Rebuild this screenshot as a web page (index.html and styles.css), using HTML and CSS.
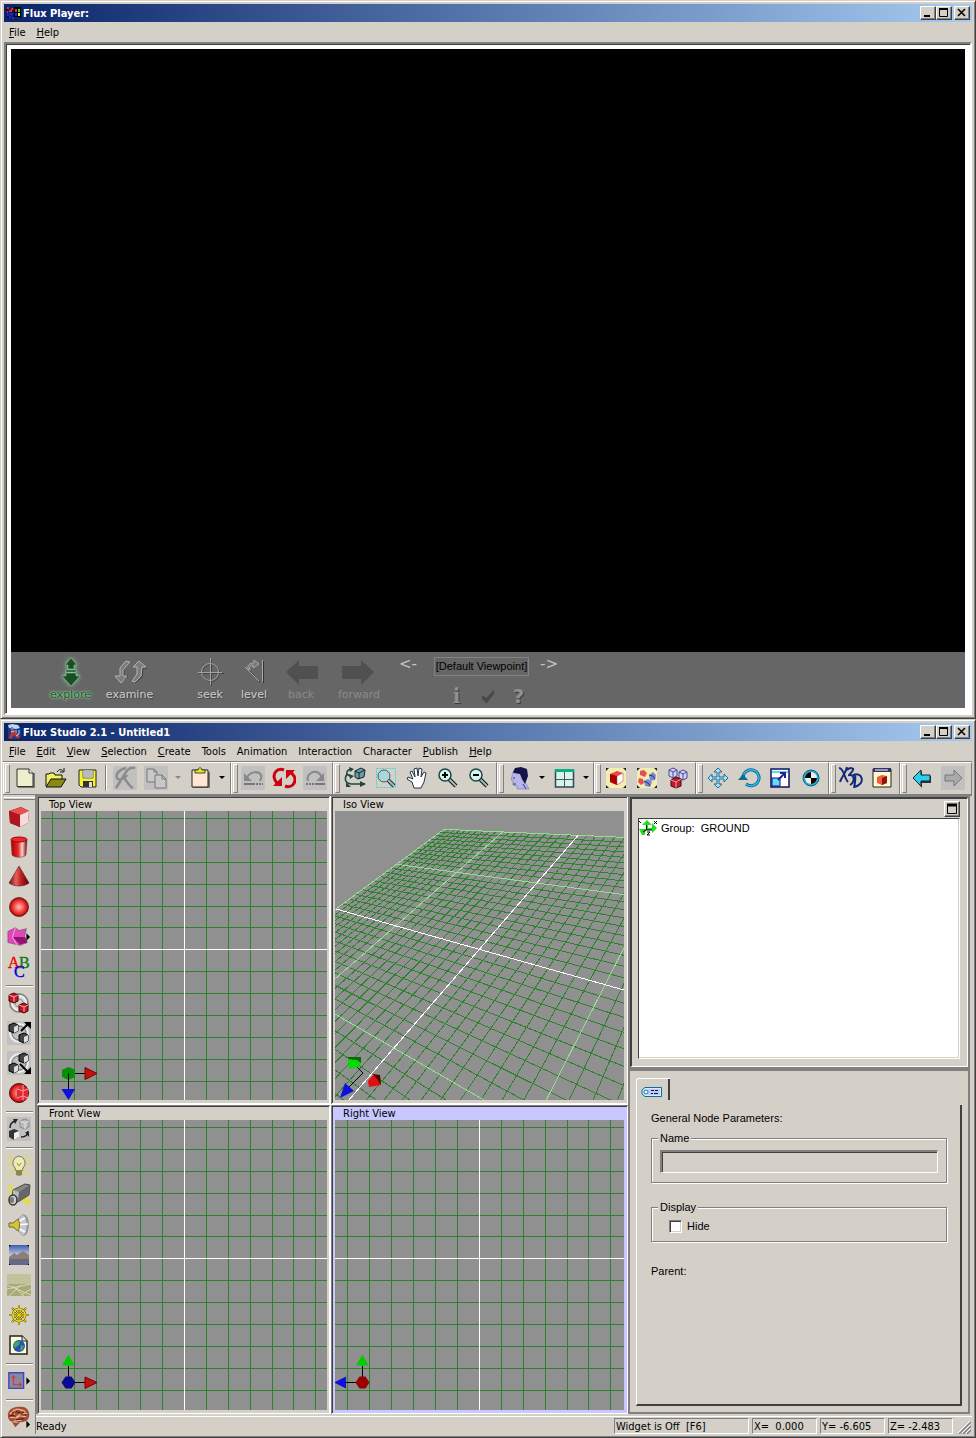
FILE: index.html
```html
<!DOCTYPE html>
<html lang="en">
<head>
<meta charset="utf-8">
<title>Flux Studio</title>
<link rel="stylesheet" href="styles.css">
</head>
<body>
<section class="window player">
  <header class="titlebar">
    <svg class="app-icon" viewBox="0 0 16 16"><path d="M8 2h7v11l-2-1H8z" fill="#000"/><path d="M9 4h2v3H9z" fill="#f22"/><path d="M12 4h2v3h-2z" fill="#2e2"/><path d="M9 8h2v3H9z" fill="#22f"/><path d="M12 8h2v3h-2z" fill="#ff2"/><path d="M1 3h2M5 4h2M3 6h3M1 7h1" stroke="#e22" stroke-width="2"/><path d="M1 10h2M4 9h3M3 12h2M6 13h2" stroke="#22d" stroke-width="2"/><path d="M0 5h2M3 4h1M6 7h2M1 12h2M7 11h1" stroke="#000"/></svg>
    <h1>Flux Player:</h1>
    <div class="caption-buttons">
      <button aria-label="Minimize"><svg viewBox="0 0 12 10"><path d="M2 8h6" stroke="#000" stroke-width="2"/></svg></button><button aria-label="Maximize"><svg viewBox="0 0 12 10"><path d="M1.500 1v7.500h8V1z" fill="none" stroke="#000"/><path d="M1 1h9" stroke="#000" stroke-width="2"/></svg></button><button class="close" aria-label="Close"><svg viewBox="0 0 12 10"><path d="M2 1l7 7M9 1L2 8" stroke="#000" stroke-width="1.600"/></svg></button>
    </div>
  </header>
  <nav class="menubar"><button><u>F</u>ile</button><button><u>H</u>elp</button></nav>
  <div class="player-client">
    <div class="scene"></div>
    <div class="controls">
      <button class="mode wide active"><svg viewBox="0 0 40 30"><g fill="#1d4d27" stroke="#8fce9c" stroke-width=".5"><path d="M20 1l6 7h-3v4h-6V8h-3zM15 13h10v2H15zM15 16h10v3h4l-9 10-9-10h4z"/></g></svg>explore</button>
      <button class="mode wide"><svg viewBox="0 0 40 30"><path d="M20 5l-6 7v7h4l-6 6M25 26l7-6 1-9h4" stroke="#3c3c3c" fill="none"/><g fill="#7c7c7c" stroke-width="1"><path d="M16 4l-6 7v8H5l6 7 6-7h-4v-6l7-8z" stroke="#b4b4b4"/><path d="M22 24l5-7v-7h-4l6-6 7 6h-4l-1 9-6 6z" stroke="#b4b4b4"/></g></svg>examine</button>
      <button class="mode aim"><svg viewBox="0 0 40 30"><g fill="none" stroke="#444" transform="translate(1 1)"><circle cx="20" cy="15" r="8.500"/><path d="M20.500 2v26M8 15.500h25"/></g><g fill="none" stroke="#a4a4a4"><circle cx="20" cy="15" r="8.500"/><path d="M20.500 1v27M8 15.500h24"/></g></svg>seek</button>
      <button class="mode"><svg viewBox="0 0 40 30"><g fill="none" stroke="#333" transform="translate(1 1)"><path d="M28.500 3v22M25 24L12 10"/></g><g fill="none" stroke="#aaa"><path d="M28.500 3v22M25 24L11 10"/><path d="M14 12c-1-3 1-6 6-6V3l5 4-6 4V8c-3 0-4 2-3 5z" fill="#777"/></g></svg>level</button>
      <button class="mode back off"><svg viewBox="0 0 40 30"><path d="M5 15L18 3v6h19v13H18v6z" fill="#505050"/></svg>back</button>
      <button class="mode forward off"><svg viewBox="0 0 40 30"><path d="M35 15L22 3v6H3v13h19v6z" fill="#505050"/></svg>forward</button>
      <div class="viewpoints">
        <button class="step">&lt;-</button><button class="viewpoint">[Default Viewpoint]</button><button class="step next">-&gt;</button>
        <div class="extras">
          <button class="glyph info">i</button>
          <button aria-label="Accept"><svg viewBox="0 0 16 16"><path d="M2 7l4 3 8-8v4l-7 9h-1L2 11z" fill="#484848"/></svg></button>
          <button class="glyph">?</button>
        </div>
      </div>
    </div>
  </div>
</section>

<section class="window studio">
  <header class="titlebar">
    <svg class="app-icon" viewBox="0 0 16 16"><path d="M2 1h9l4 4v7l-3 3H5l-3-4z" fill="#243a80"/><path d="M2 1l4-1 6 1 2 3-4 1-7-1z" fill="#bcd8ee"/><path d="M5 5l4 1 5 7-2 2-4-4-3 4-3-1 3-5z" fill="#b03a3a"/><path d="M6 3v3M10 6v3M13 6v4" stroke="#5a8ad0" stroke-width="2"/><path d="M5 8l3-1M10 12l3-2" stroke="#ecc"/></svg>
    <h1>Flux Studio 2.1 - Untitled1</h1>
    <div class="caption-buttons">
      <button aria-label="Minimize"><svg viewBox="0 0 12 10"><path d="M2 8h6" stroke="#000" stroke-width="2"/></svg></button><button aria-label="Maximize"><svg viewBox="0 0 12 10"><path d="M1.500 1v7.500h8V1z" fill="none" stroke="#000"/><path d="M1 1h9" stroke="#000" stroke-width="2"/></svg></button><button class="close" aria-label="Close"><svg viewBox="0 0 12 10"><path d="M2 1l7 7M9 1L2 8" stroke="#000" stroke-width="1.600"/></svg></button>
    </div>
  </header>
  <nav class="menubar"><button><u>F</u>ile</button><button><u>E</u>dit</button><button><u>V</u>iew</button><button><u>S</u>election</button><button><u>C</u>reate</button><button>Tools</button><button>Animation</button><button>Interaction</button><button>Character</button><button><u>P</u>ublish</button><button><u>H</u>elp</button></nav>

  <div class="toolbar">
    <div class="band">
      <button aria-label="New"><svg viewBox="0 0 24 24"><path d="M5 22h17V7h-2v13H5z" fill="#777"/><path d="M4 3h12l4 4v13.500H4z" fill="#eef0cc" stroke="#333"/><path d="M16 3v4h4" fill="#fff" stroke="#333"/></svg></button>
      <button aria-label="Open"><svg viewBox="0 0 24 24"><path d="M2 20V8h3l1-1h4l1 2h7v4" fill="#f0f060" stroke="#111"/><path d="M2 21l5-8h15l-5 8z" fill="#8a8a10" stroke="#111"/><path d="M13 6c2-3 4-3 6-1m1-3v4h-4" fill="none" stroke="#111"/></svg></button>
      <button aria-label="Save"><svg viewBox="0 0 24 24"><path d="M4 4h17v17H6l-2-2z" fill="#f4f430" stroke="#222"/><path d="M8 4h10v8H8z" fill="#fff" stroke="#666"/><path d="M9 6h8M9 8h8M9 10h8" stroke="#777"/><path d="M8 15h10v6H8z" fill="#333"/><path d="M14 16h3v5h-3z" fill="#ddd"/></svg></button>
      <i class="divider"></i>
      <button aria-label="Cut" class="disabled"><svg viewBox="0 0 24 24"><path d="M22 2c-4-1-7 1-9 4L3 22M13 2C7 3 2 8 4 12c2 3 8 1 10-3M10 12c3 0 5 8 10 10" fill="none" stroke="#8c8c8c" stroke-width="2.500"/></svg></button>
      <button aria-label="Copy" class="disabled"><svg viewBox="0 0 24 24"><g fill="#c8c8c8" stroke="#777"><path d="M3 3h7l3 3v10H3z"/><path d="M11 9h7l4 4v9H11z"/><path d="M18 9v4h4M10 3v3h3" fill="none"/></g></svg></button>
      <button aria-label="Copy options" class="drop"><svg viewBox="0 0 8 8"><path d="M1 2h6L4 5z" fill="#888"/></svg></button>
      <button aria-label="Paste"><svg viewBox="0 0 24 24"><path d="M5 6h17v16H5z" fill="#777"/><path d="M4 4h16v17H4z" fill="#ffe6d2" stroke="#222"/><path d="M7 4h3c0-3 4-3 4 0h3v3H7z" fill="#e4e420" stroke="#443"/></svg></button>
      <button aria-label="Paste options" class="drop"><svg viewBox="0 0 8 8"><path d="M1 2h6L4 5z"/></svg></button>
    </div>
    <div class="band">
      <button aria-label="Undo" class="disabled"><svg viewBox="0 0 24 24"><path d="M6 12c2-6 11-8 14-3 1 2 0 4-1 6" fill="none" stroke="#888" stroke-width="2"/><path d="M3 7v8h8z" fill="#888"/><path d="M3 18h9" stroke="#777" stroke-width="2"/><path d="M12 18h10" stroke="#777" stroke-width="2" stroke-dasharray="2 1"/></svg></button>
      <button aria-label="Update"><svg viewBox="0 0 24 24"><g fill="none" stroke="#d00010" stroke-width="3"><path d="M12 4C5 1 0 8 3 14l3 5M13 20c7 3 12-4 9-10l-4-5"/></g><path d="M1 20h9v-9zM23 4h-9v9z" fill="#d00010"/></svg></button>
      <button aria-label="Redo" class="disabled"><svg viewBox="0 0 24 24"><path d="M5 15C3 8 11 3 17 8l2 4" fill="none" stroke="#888" stroke-width="2"/><path d="M21 7v8h-8z" fill="#888"/><path d="M3 18h10" stroke="#777" stroke-width="2" stroke-dasharray="2 1"/><path d="M13 18h9" stroke="#777" stroke-width="2"/></svg></button>
    </div>
    <div class="band">
      <button aria-label="Orbit"><svg viewBox="0 0 24 24"><path d="M12 5l6-3 4 2-1 7-6 2-3-2z" fill="#68a0a0" stroke="#123"/><path d="M12 5l4 2 6-3M16 7v6" fill="none" stroke="#123"/><path d="M9 3C3 4 2 8 7 10M4 8c-3 5-2 9 4 10h14" fill="none" stroke="#244" stroke-width="1.500"/><path d="M6 1l5 2-4 3zM6 8l5 2-4 3zM17 15l6 3-6 3zM3 16l5 5H3z" fill="#244"/></svg></button>
      <button aria-label="Zoom region"><svg viewBox="0 0 24 24"><path d="M2.500 2.500h19v19h-19z" fill="none" stroke="#38dede" stroke-dasharray="2 1"/><path d="M14 14l6 6" stroke="#333" stroke-width="4"/><path d="M14 14l6 6" stroke="#9dbdbd" stroke-width="2"/><circle cx="10" cy="10" r="6" fill="#a8d8da" stroke="#556"/></svg></button>
      <button aria-label="Pan"><svg viewBox="0 0 24 24"><path d="M9 22l-2-6-5-3 1-2 5 2-3-7 2-1 3 6-1-8 3-1 1 8 1-8 3 1-1 8 3-5 2 1-2 9-3 6z" fill="#fff" stroke="#234"/></svg></button>
      <button aria-label="Zoom in"><svg viewBox="0 0 24 24"><path d="M13 13l7 7" stroke="#111" stroke-width="4"/><path d="M13 13l7 7" stroke="#a0c4c0" stroke-width="2"/><circle cx="9" cy="9" r="6" fill="#d4f4ef" stroke="#244" stroke-width="1.500"/><path d="M6 9h6M9 6v6" stroke="#000" stroke-width="2"/></svg></button>
      <button aria-label="Zoom out"><svg viewBox="0 0 24 24"><path d="M13 13l7 7" stroke="#111" stroke-width="4"/><path d="M13 13l7 7" stroke="#a0c4c0" stroke-width="2"/><circle cx="9" cy="9" r="6" fill="#d4f4ef" stroke="#244" stroke-width="1.500"/><path d="M6 9h6" stroke="#000" stroke-width="2"/></svg></button>
    </div>
    <div class="band avatar">
      <button aria-label="Avatar"><svg viewBox="0 0 24 24"><path d="M5 6L3 14l2 1v4l4 1v3h12l-4-7 2-8z" fill="#b5b5e6" stroke="#77a" stroke-width=".6"/><path d="M5 6l2-4 6-1 6 2 1 7-3 8-3-5-2-5-6-1z" fill="#14144a"/><path d="M5 12h2M5 18h3M15 18l3 5" stroke="#339"/></svg></button>
      <button aria-label="Avatar options" class="drop"><svg viewBox="0 0 8 8"><path d="M1 2h6L4 5z"/></svg></button>
      <button aria-label="Layout"><svg viewBox="0 0 24 24"><path d="M3.500 4h18v17h-18z" fill="#d8f4e6" stroke="#345" stroke-width="1.500"/><path d="M3 3h19v3H3z" fill="#0bae84"/><path d="M12.500 6v15M3 13.500h19" stroke="#456"/></svg></button>
      <button aria-label="Layout options" class="drop"><svg viewBox="0 0 8 8"><path d="M1 2h6L4 5z"/></svg></button>
    </div>
    <div class="band">
      <button aria-label="Object"><svg viewBox="0 0 24 24"><path d="M2 2h20v20H2z" fill="#222"/><path d="M5 2h14l3 3v14l-3 3H5l-3-3V5z" fill="#f2edb0"/><path d="M6 8l7-3 6 2v8l-6 4-7-3z" fill="#e44"/><path d="M6 8l7 2v9l-7-3z" fill="#a00"/><path d="M13 10l6-3v8l-6 4z" fill="#fff" stroke="#a44" stroke-width=".5"/></svg></button>
      <button aria-label="Objects"><svg viewBox="0 0 24 24"><path d="M2 2h20v20H2z" fill="#222"/><path d="M5 2h14l3 3v14l-3 3H5l-3-3V5z" fill="#f2edb0"/><path d="M5 5l4-1 3 3-2 4-5-2zM4 12l4 1 1 4-3 2-3-3z" fill="#e45050"/><path d="M14 9l4-3 3 3-1 5-5 1zM9 15l4-2 4 3-2 5-5-1z" fill="#7888d8"/><path d="M14 9l4 1 2 3M9 15l4 2 2 3" fill="none" stroke="#336"/></svg></button>
      <button aria-label="Group"><svg viewBox="0 0 24 24"><g fill="#d8d4e8" stroke="#4545aa"><path d="M3 4l4-2 4 2v6l-4 2-4-2zM3 4l4 2v6M7 6l4-2M13 6l4-2 4 2v6l-4 2-4-2zM13 6l4 2v6M17 8l4-2"/></g><path d="M5 14l5-3 5 2v7l-5 2-5-2z" fill="#b52030" stroke="#501"/><path d="M5 14l5 2v6M10 16l5-3" fill="none" stroke="#f99"/></svg></button>
    </div>
    <div class="band">
      <button aria-label="Move"><svg viewBox="0 0 24 24"><path d="M12 2l4 4h-3v5h5V8l4 4-4 4v-3h-5v5h3l-4 4-4-4h3v-5H6v3l-4-4 4-4v3h5V6H8z" fill="#a4e8f6" stroke="#246a99"/></svg></button>
      <button aria-label="Rotate"><svg viewBox="0 0 24 24"><path d="M6 12a8 8 0 1 1 3 6" fill="none" stroke="#0b5aa0" stroke-width="3"/><path d="M6 12a8 8 0 1 1 3 6" fill="none" stroke="#29bce0" stroke-width="1.500"/><path d="M1 14l5-6 5 6z" fill="#087292"/></svg></button>
      <button aria-label="Scale"><svg viewBox="0 0 24 24"><path d="M3 3h18v18H3z" fill="#fff" stroke="#116" stroke-width="1.500"/><path d="M4 5h16v2H4z" fill="#51e0f0"/><path d="M4 12h8v8H4z" fill="#61def0" stroke="#118"/><path d="M10 14l7-7m0 5V7h-5" stroke="#229" fill="none" stroke-width="2"/></svg></button>
      <button aria-label="Center"><svg viewBox="0 0 24 24"><circle cx="12" cy="12" r="8" fill="#29a8c8" stroke="#07668c"/><circle cx="12" cy="12" r="6" fill="#eee"/><path d="M12 12V6a6 6 0 0 0-6 6zM12 12v6a6 6 0 0 0 6-6z"/></svg></button>
    </div>
    <div class="band">
      <button aria-label="X3D"><svg viewBox="0 0 24 24"><path d="M0 2c5 0 5 10 9 14M8 1C7 7 3 10 1 16M8 4c3-3 7-2 6 0-1 3-4 4-4 5 6-1 6 7 1 10M16 8c1 5 0 9-1 14M14 9c10-4 13 10 1 12" fill="none" stroke="#182878" stroke-width="2"/></svg></button>
      <button aria-label="Preview"><svg viewBox="0 0 24 24"><path d="M3 3h18v18H3z" fill="#fff9d0" stroke="#222"/><path d="M3 2h18v4H3z" fill="#33336a"/><path d="M5 4h13" stroke="#fff"/><path d="M7 11l5-2 5 1v7l-5 2-5-2z" fill="#f45c40"/><path d="M12 12l5-2v7l-5 2z" fill="#8c1414"/></svg></button>
    </div>
    <div class="band">
      <button aria-label="Previous"><svg viewBox="0 0 24 24"><path d="M4 13l8-8v5h9v7h-9v5z" fill="#333"/><path d="M3 12l8-8v5h9v6h-9v5z" fill="#28d0ee" stroke="#123"/></svg></button>
      <button aria-label="Next" class="disabled"><svg viewBox="0 0 24 24"><path d="M21 12l-8-8v5H4v6h9v5z" fill="#aaa" stroke="#777"/></svg></button>
    </div>
  </div>

  <div class="studio-body">
    <div class="palette">
      <button aria-label="Box"><svg viewBox="0 0 24 24"><path d="M2 6l12-4 8 4-1 12-8 4-10-4z" fill="#7a0c14"/><path d="M2 6l12-4 8 4-9 4z" fill="#e85050"/><path d="M2 6l11 4v12L3 18z" fill="#b01520"/><path d="M13 10l9-4-1 12-8 4z" fill="#f7dada"/></svg></button>
      <button aria-label="Cylinder"><svg viewBox="0 0 24 24"><defs><linearGradient id="cyl"><stop offset="0" stop-color="#a00"/><stop offset=".45" stop-color="#e42a2a"/><stop offset=".7" stop-color="#fbd0d0"/><stop offset="1" stop-color="#700"/></linearGradient></defs><path d="M4 5l1 15c2 3 12 3 14 0l1-15z" fill="url(#cyl)" stroke="#733" stroke-width=".5"/><ellipse cx="12" cy="4.500" rx="8" ry="2.500" fill="#f22" stroke="#811"/></svg></button>
      <button aria-label="Cone"><svg viewBox="0 0 24 24"><defs><linearGradient id="cone"><stop offset="0" stop-color="#700c0c"/><stop offset=".35" stop-color="#e86060"/><stop offset=".6" stop-color="#c02020"/><stop offset="1" stop-color="#500"/></linearGradient></defs><path d="M12 1l10 17c-5 4-15 4-20 0z" fill="url(#cone)" stroke="#522" stroke-width=".6"/></svg></button>
      <button aria-label="Sphere"><svg viewBox="0 0 24 24"><defs><radialGradient id="ball"><stop offset="0" stop-color="#ffc0b0"/><stop offset=".6" stop-color="#f24040"/><stop offset="1" stop-color="#a00"/></radialGradient></defs><circle cx="12" cy="12" r="9.500" fill="url(#ball)" stroke="#511" stroke-width=".7"/></svg></button>
      <button aria-label="Extrusion"><svg viewBox="0 0 26 24"><path d="M1 6l8-4 4 3 8-2-2 8 3 7-8 3-13-3z" fill="#e048b8" stroke="#747" stroke-width=".7"/><path d="M6 12h13l3 6-8 2z" fill="#941272"/><path d="M9 2L6 12l5 9" fill="none" stroke="#f7a8e0"/><path d="M21 8l4 4-4 4z"/></svg></button>
      <button aria-label="Text"><svg viewBox="0 0 24 24"><g font-family="Liberation Serif" font-size="16" stroke-width=".4"><text x="1" y="13" fill="#e00" stroke="#e00">A</text><text x="12" y="13" fill="#187818" stroke="#187818">B</text><text x="7" y="22" fill="#00d" stroke="#00d">C</text></g></svg></button>
      <hr>
      <button aria-label="Link"><svg viewBox="0 0 24 24"><circle cx="12" cy="12" r="9" fill="none" stroke="#888" stroke-width="2"/><circle cx="12" cy="12" r="7" fill="none" stroke="#eee" stroke-width="2"/><circle cx="12" cy="12" r="4" fill="none" stroke="#999"/><path d="M2 4l5-2 4 2v6l-4 2-5-2zM12 14l5-2 4 2v6l-4 2-5-2z" fill="#c01828" stroke="#400"/><path d="M2 4l5 2v5M7 6l4-2M12 14l5 2v5M17 16l4-2" fill="none" stroke="#faa"/></svg></button>
      <button aria-label="Out" class="disabled"><svg viewBox="0 0 24 24"><circle cx="12" cy="12" r="9" fill="none" stroke="#eee" stroke-width="2"/><circle cx="12" cy="12" r="7" fill="none" stroke="#777"/><path d="M2 4l5-2 4 2v6l-4 2-5-2zM12 14l5-2 4 2v6l-4 2-5-2z" fill="#444" stroke="#000"/><path d="M7 6l4-2v6l-4 2zM17 16l4-2v6l-4 2z" fill="#ddd"/><path d="M14 10l8-8" stroke="#000" stroke-width="2"/><path d="M17 1h7v7z"/></svg></button>
      <button aria-label="In" class="disabled"><svg viewBox="0 0 24 24"><circle cx="12" cy="12" r="9" fill="none" stroke="#eee" stroke-width="2"/><circle cx="12" cy="12" r="7" fill="none" stroke="#777"/><path d="M12 4l5-2 4 2v6l-4 2-5-2zM2 14l5-2 4 2v6l-4 2-5-2z" fill="#444" stroke="#000"/><path d="M17 6l4-2v6l-4 2zM7 16l4-2v6l-4 2z" fill="#ddd"/><path d="M13 13l9 9" stroke="#000" stroke-width="2"/><path d="M17 23h7v-7z"/></svg></button>
      <button aria-label="Mesh"><svg viewBox="0 0 24 24"><circle cx="12" cy="12" r="9.500" fill="url(#ball)" stroke="#511"/><path d="M10 8l5-4 6 4v9l-5 3-6-3z" fill="#e02838"/><path d="M10 8l6 2 5-2M16 10v9M16 4v6M10 17l6-2 5 2" stroke="#f9a0a0" fill="none"/></svg></button>
      <hr>
      <button aria-label="Replace" class="disabled"><svg viewBox="0 0 24 24"><path d="M2 14l5-2 5 2v6l-5 3-5-3z" fill="#333"/><path d="M7 16l5-2v6l-5 3z" fill="#eee"/><path d="M13 4l5-2 4 2v6l-4 2-5-2z" fill="#bbb" stroke="#888"/><path d="M13 4l5 2v6M18 6l4-2" fill="none" stroke="#e4e4e4"/><path d="M3 11c0-4 2-6 5-7M21 14c0 4-3 6-7 6" stroke="#222" stroke-width="1.500" fill="none"/><path d="M6 2h5l-3 5zM18 15h4v5z" fill="#222"/></svg></button>
      <hr>
      <button aria-label="Light"><svg viewBox="0 0 24 24"><path d="M2 2l20 20M22 2L2 22M0 11h24" stroke="#e2dc40" stroke-width="1.500"/><path d="M12 3a7 7 0 0 0-4 12l1 3h6l1-3a7 7 0 0 0-4-12z" fill="#ece8b8" stroke="#776"/><path d="M9 17h6v5l-3 1-3-1z" fill="#8c8850"/><path d="M10 10l2 3 2-3" fill="none" stroke="#a90"/></svg></button>
      <button aria-label="Camera"><svg viewBox="0 0 24 24"><path d="M2 2l20 20M22 2L2 22M1 8l22 10" stroke="#e8e020" stroke-width="2"/><path d="M6 7l12-6 5 1-1 10-11 7-6-3z" fill="#888" stroke="#444"/><path d="M6 7l6 2-1 9-5-2z" fill="#bbb"/><path d="M12 9l11-7-1 10-11 7z" fill="#666"/><ellipse cx="6" cy="17" rx="4" ry="5" fill="#ccc" stroke="#333" stroke-width="1.500"/><ellipse cx="5" cy="17" rx="2" ry="3" fill="#777"/></svg></button>
      <button aria-label="Sound"><svg viewBox="0 0 24 24"><ellipse cx="17" cy="12" rx="5" ry="10.500" fill="#9a9aa2"/><path d="M8 9l8-7.500c5 2 6 19 0 21L8 15z" fill="#c8c8ce" stroke="#888" stroke-width=".7"/><path d="M9 10l9-5M9 12l12-1M9 14l9 5" stroke="#fff" stroke-width="1.500"/><path d="M2 10h4l5-4c2 3 2 9 0 12l-5-4H2z" fill="#d8c62c" stroke="#664"/></svg></button>
      <button aria-label="Background"><svg viewBox="0 0 24 24"><defs><linearGradient id="sky" x2="0" y2="1"><stop offset="0" stop-color="#3c5ea8"/><stop offset="1" stop-color="#eef"/></linearGradient></defs><path d="M2 2h20v20H2z"/><path d="M4 2h16l2 2v12H2V4z" fill="url(#sky)"/><path d="M2 14l5-4 3 2 6-4 6 4v8l-2 2H4l-2-2z" fill="#8c8070"/><path d="M2 16h20v4l-2 2H4l-2-2z" fill="#66688a"/></svg></button>
      <button aria-label="Ground"><svg viewBox="0 0 24 24"><path d="M0 1h24v22H0z" fill="#a8aa78"/><path d="M0 1h24v10H0z" fill="#c2c39c"/><path d="M0 16l24-5M0 12l24 10M2 23l12-11M17 23L6 13M14 22l10-6" stroke="#d8dabc"/></svg></button>
      <button aria-label="Navigation"><svg viewBox="0 0 24 24"><g fill="none" stroke="#6a6010" stroke-width="2.500"><circle cx="12" cy="12" r="6"/><path d="M12 2v20M2 12h20M5 5l14 14M19 5L5 19" stroke-width="2"/></g><g fill="none" stroke="#ecd820"><circle cx="12" cy="12" r="6" stroke-width="1.500"/><path d="M12 2v20M2 12h20M5 5l14 14M19 5L5 19"/></g></svg></button>
      <button aria-label="World"><svg viewBox="0 0 24 24"><path d="M3 3h12l5 5v13H3z" fill="#fffed0" stroke="#222" stroke-width="1.500"/><path d="M15 3v5h5" fill="#ddb" stroke="#222"/><circle cx="12" cy="13" r="6" fill="#264ec0"/><path d="M8 9l5-1-1 4-4 3-2-3zM14 12l3 1-2 5-2-1z" fill="#40a860"/></svg></button>
      <hr>
      <button aria-label="Axes"><svg viewBox="0 0 26 24"><path d="M2 3h16v17H2z" fill="#8888a0" stroke="#3848c0" stroke-width="1.500"/><path d="M7 7v9h8M5 9l2-3 2 3M13 14l3 2-3 2" fill="none" stroke="#e22"/><path d="M21 8l4 4-4 4z"/></svg></button>
      <hr>
      <button aria-label="Behavior"><svg viewBox="0 0 26 24"><path d="M1 11C0 4 8 0 14 1c7-1 11 5 10 10-1 7-7 6-11 7-6 1-12-1-12-7zM5 17l4 6 5-5z" fill="#a04c32"/><path d="M3 9c3-4 5-2 5 0s4 4 6 0 4 1 8-1M6 5c4 0 3-3 8-1s5 0 6 3M3 13c4-2 6 2 9-1s5 1 9-1M7 17c3-2 6 0 9-2" fill="none" stroke="#ecb498" stroke-width="1.300"/><path d="M3 11c4-2 5 0 7 0M10 6c4 1 4 3 8 1M10 15l8-1M6 7l2 1M19 9l2 1" fill="none" stroke="#571c0c" stroke-width="1.300"/><path d="M21 16l4 4-4 4z"/></svg></button>
    </div>

    <div class="stage">
      <div class="workspace">
        <div class="views">
          <section class="view"><h2>Top View</h2>
            <svg class="grid" viewBox="0 0 286 289" preserveAspectRatio="xMinYMin slice" data-plane="143,138"><g class="lines"></g><g class="gizmo"><path class="stem" d="M34 262.500h12"/><path fill="#069006" d="M21 259l3-1.500 3.500-1.500 3.500 1.500 3 1.500v7l-3 1.500-3.500 1.500-3.500-1.500-3-1.500z"/><path class="stem" d="M27.500 262v17"/><path class="red" d="M44 256.500l12 6-12 6z"/><path class="blue" d="M20.500 278h13.500l-6.500 11z"/></g></svg></section>
          <section class="view"><h2>Iso View</h2>
            <svg class="grid" viewBox="0 0 289 289" preserveAspectRatio="xMinYMin slice" data-plane="iso"><g class="lines"></g><g class="gizmo"><path class="stem" d="M22 256l6 6-16 16"/><path fill="#0d0" d="M13 248l9 1 4 3-3 4-9 2z"/><path fill="#0a6a0a" d="M13 246h13v6l-4-3-9-1z"/><path fill="#e01010" d="M33 270l6-7 5 4 2 7-12 2z"/><path fill="#500" d="M38 263l7 1 1 10-4-6z"/><path class="blue" d="M10 272l9 8-14 7z"/></g></svg></section>
          <section class="view"><h2>Front View</h2>
            <svg class="grid" viewBox="0 0 286 290" preserveAspectRatio="xMinYMin slice" data-plane="143,138"><g class="lines"></g><g class="gizmo"><path class="stem" d="M27.500 246v16M28 262.500h18"/><path class="navy" d="M20.500 262.500l4-6h6l4 6-4 6h-6z"/><path class="red" d="M44 257l12 5.500-12 6z"/><path class="green" d="M21 245.500l6.500-11 6 11z"/></g></svg></section>
          <section class="view current"><h2>Right View</h2>
            <svg class="grid" viewBox="0 0 289 290" preserveAspectRatio="xMinYMin slice" data-plane="144,138"><g class="lines"></g><g class="gizmo"><path class="stem" d="M27.500 246v16M10 262.500h18"/><path fill="#900" d="M20.500 262.500l4-6h6l4 6-4 6h-6z"/><path class="blue" d="M11 256.500L-1 262.500l12 6z"/><path class="green" d="M21 245.500l6.500-11 6 11z"/></g></svg></section>
        </div>

        <div class="side">
          <section class="tree-panel">
            <div class="tree-head"><button aria-label="Expand panel"><svg viewBox="0 0 12 12"><path d="M1.500 2v8.500h9V2z" fill="none" stroke="#000"/><path d="M1 2h10" stroke="#000" stroke-width="3"/></svg></button></div>
            <ul class="tree"><li><svg viewBox="0 0 18 16"><path d="M3 5l5-5 5 5zM13 3l5 5-5 5zM0 9h6v6H3z" fill="#1ee01e"/><path d="M8 4v5h5M8 9l-5 4" fill="none" stroke="#1ee01e" stroke-width="2"/><path d="M7.500 5v5H13M7 10l-3 2M0 1l2 2M15 1l3 3m0-3l-3 3M8 12h3l-3 3h3" fill="none" stroke="#000"/></svg>Group:&nbsp; GROUND</li></ul>
          </section>
          <section class="props">
            <button class="tab" aria-label="General"><svg viewBox="0 0 22 12"><path d="M4 1.500h16.500v9H4L1 8V4z" fill="#c4f4ff" stroke="#126a98"/><path d="M7 3h12v6H7z" fill="#c8c8ff"/><circle cx="5" cy="6" r="2" fill="#fff" stroke="#126a98"/><path d="M10 4.500h3m1 0h3M10 7.500h2m1 0h4" stroke="#113"/></svg></button>
            <div class="page">
              <p>General Node Parameters:</p>
              <fieldset class="name"><legend><label for="node-name">Name</label></legend><input id="node-name" type="text" disabled></fieldset>
              <fieldset class="display"><legend>Display</legend><input id="hide" type="checkbox"><label for="hide">Hide</label></fieldset>
              <p>Parent:</p>
            </div>
          </section>
        </div>
      </div>
      <footer class="status">
        <span class="message">Ready</span>
        <span class="cell widget">Widget is Off&nbsp; [F6]</span>
        <span class="cell">X=&nbsp; 0.000</span>
        <span class="cell">Y= -6.605</span>
        <span class="cell">Z= -2.483</span>
        <svg class="sizer" viewBox="0 0 14 14"><path d="M1 13L13 1M5 13l8-8M9 13l4-4" stroke="#fff"/><path d="M2 14L14 2M6 14l8-8M10 14l4-4" stroke="#808080" stroke-width="1.500"/></svg>
      </footer>
    </div>
  </div>
</section>
<script src="grid.js"></script>
</body>
</html>
```

FILE: styles.css
```css
* { box-sizing: border-box; }
:root { --face: #d4d0c8; --shadow: #808080; --dark: #404040; }
body {
  margin: 0; min-height: 100vh; display: flex; flex-direction: column;
  background: var(--face); color: #000;
  font: 11px/13px "DejaVu Sans Condensed", "Noto Sans", sans-serif;
}
button { font: inherit; color: inherit; border: 0; padding: 0; background: none; }
svg { display: block; }
h1, h2, p, ul { margin: 0; padding: 0; font-size: inherit; font-weight: normal; }

.window {
  flex: 1 1 0; display: flex; flex-direction: column; padding: 3px;
  border: 1px solid var(--face); border-right-color: var(--dark); border-bottom-color: var(--dark);
  box-shadow: inset 1px 1px #fff, inset -1px -1px var(--shadow);
}
.titlebar {
  display: flex; align-items: center; height: 18px; padding: 0 2px; flex: none;
  background: linear-gradient(90deg, #0a246a, #a6caf0); color: #fff;
}
.app-icon { width: 16px; height: 16px; }
.titlebar h1 { margin-left: 1px; font-weight: bold; }
.caption-buttons { display: flex; margin-left: auto; }
.caption-buttons button, .tree-head button {
  width: 16px; height: 14px; padding: 1px; background: var(--face);
  border: 1px solid #fff; border-right-color: var(--dark); border-bottom-color: var(--dark);
  box-shadow: inset -1px -1px var(--shadow);
}
.caption-buttons svg { width: 12px; height: 10px; }
.caption-buttons .close { margin-left: 2px; }
.menubar { display: flex; gap: 11px; height: 20px; padding: 0 5px; flex: none; align-items: center; }
.menubar u { text-underline-offset: 1px; }

.player-client {
  flex: 1; display: flex; flex-direction: column; padding: 5px; background: #fff;
  border: 2px solid var(--shadow); border-right-color: #fff; border-bottom-color: #fff;
  box-shadow: inset 1px 1px var(--dark);
}
.scene { flex: 1; background: #000; }
.controls { display: flex; height: 56px; padding: 5px 0 0 30px; background: #666; color: #ccc; font: 11px/13px "DejaVu Sans", sans-serif; }
.mode { display: flex; flex-direction: column; align-items: center; gap: 1px; width: 44px; height: 46px; text-shadow: 1px 1px #444; }
.mode svg { width: 40px; height: 30px; flex: none; }
.mode.wide { width: 59px; }
.mode.aim { margin-left: 29px; }
.mode.back { width: 50px; }
.mode.forward { width: 66px; }
.mode.off { color: #8a8a8a; text-shadow: none; }
.mode.active { color: #1f5a2b; text-shadow: 0 0 2px #9fe0ac, 0 0 3px #8ccf99; }
.mode.active svg { filter: drop-shadow(0 0 2px #8fd09d); }
.viewpoints { display: grid; grid-template-columns: 32px 95px 32px; column-gap: 3px; row-gap: 9px; align-content: start; padding-left: 7px; }
.step { font-size: 15px; line-height: 15px; color: #c4c4c4; text-align: left; padding-bottom: 4px; }
.step.next { padding-left: 8px; }
.viewpoint { height: 19px; border: 1px solid #828282; color: #000; font: 11px/13px "Liberation Sans", sans-serif; white-space: nowrap; }
.extras { grid-column: 1 / -1; display: flex; justify-content: center; gap: 15px; height: 22px; padding-left: 12px; align-items: center; }
.extras button { width: 16px; }
.extras .glyph { font: bold 20px/22px "DejaVu Sans", sans-serif; color: #909090; text-shadow: 1px 1px #3c3c3c; }
.extras .info { font-family: "DejaVu Serif", serif; }

.toolbar { display: flex; height: 34px; flex: none; border-top: 1px solid var(--shadow); border-bottom: 1px solid var(--shadow); margin-left: -1px; }
.band { position: relative; display: flex; align-items: flex-start; padding: 1px 2px 0 5px; border-top: 1px solid #fff; border-left: 1px solid #fff; border-right: 1px solid var(--shadow); flex: none; }
.band:last-child { flex: 1; }
.band.avatar { padding-left: 6px; padding-right: 1px; }
.band::before { content: ""; position: absolute; left: 1px; top: 1px; bottom: 1px; width: 3px; border: 1px solid #fff; border-right-color: var(--shadow); border-bottom-color: var(--shadow); }
.band button { width: 31px; height: 28px; display: grid; place-items: center; }
.band svg, .palette svg { width: 24px; height: 24px; }
.band .drop { width: 13px; }
.band .drop svg { width: 8px; height: 8px; }
.disabled svg { background: #c0c0c0; }
.divider { width: 2px; height: 26px; margin: 1px 2px 0 3px; border-left: 1px solid var(--shadow); border-right: 1px solid #fff; }

.studio-body { flex: 1; display: flex; min-height: 0; }
.palette { width: 32px; padding-top: 7px; flex: none; border-right: 1px solid var(--shadow); background: linear-gradient(#fff, #fff) 0 2px / 31px 1px no-repeat, linear-gradient(#808080, #808080) 0 4px / 31px 1px no-repeat; }
.palette button { display: grid; place-items: center; width: 30px; height: 30px; }
.palette hr { width: 27px; height: 2px; margin: 3px 2px 1px; border: 0; border-top: 1px solid var(--shadow); border-bottom: 1px solid #fff; }

.stage { flex: 1; display: flex; flex-direction: column; min-width: 0; }
.workspace { flex: 1; min-height: 0; display: grid; grid-template-columns: minmax(0, 591fr) minmax(0, 344fr); padding: 1px 0 0 1px; background: var(--shadow); }
.views { display: grid; grid-template: minmax(0, 308fr) minmax(0, 309fr) / minmax(0, 293fr) minmax(0, 297fr); gap: 1px; min-height: 0; background: #fff; }
.view {
  display: flex; flex-direction: column; min-height: 0; padding: 2px 4px 4px; background: var(--face);
  box-shadow: inset 1px 1px var(--shadow), inset -1px -1px #fff, inset 2px 2px var(--dark);
}
.view:nth-child(odd) { padding-right: 3px; }
.view.current { background: #c8c8ff; }
.view h2 { height: 13px; flex: none; padding-left: 8px; }
.grid { flex: 1 1 0; min-height: 0; width: 100%; background: #909090; }
.lines path { fill: none; stroke-width: 1px; shape-rendering: crispEdges; }
.minor { stroke: #2d822d; }
.major { stroke: #90e090; }
.axis { stroke: #fff; }
.stem { fill: none; stroke: #000; }
.red { fill: #c80f0f; stroke: #700; stroke-width: 1px; }
.blue { fill: #1010dc; }
.navy { fill: #0a0a90; }
.green { fill: #0c0; }

.side { display: grid; grid-template-rows: minmax(0, 270fr) minmax(0, 341fr); gap: 4px; padding: 1px 2px 2px; border-right: 2px solid var(--face); font-family: "Liberation Sans", sans-serif; }
.tree-panel { display: flex; flex-direction: column; background: var(--face); padding: 0 7px 7px 6px; border: solid var(--dark); border-right-color: #fff; border-bottom-color: #fff; border-width: 2px 1px 1px 2px; }
.tree-head { height: 19px; padding: 2px 0 0; flex: none; }
.tree-head button { display: block; margin-left: auto; height: 16px; }
.tree-head svg { width: 12px; height: 12px; }
.tree { flex: 1; list-style: none; background: #fff; border: 1px solid var(--dark); border-right-color: #fff; border-bottom-color: #fff; box-shadow: inset -1px -1px var(--face); }
.tree li { display: flex; align-items: center; gap: 4px; height: 18px; }
.tree svg { width: 18px; height: 16px; }
.props { display: flex; flex-direction: column; align-items: stretch; background: var(--face); padding: 7px 6px 6px; }
.tab { display: block; width: 34px; height: 27px; flex: none; padding: 0 0 1px 4px; border-top: 1px solid #fff; border-left: 1px solid #fff; border-top-left-radius: 3px; background: linear-gradient(#404040, #404040) right top / 2px 21px no-repeat; }
.tab svg { width: 22px; height: 12px; }
.page { flex: 1; padding: 7px 13px 0 14px; border-left: 1px solid #fff; border-right: 2px solid var(--dark); border-bottom: 2px solid var(--dark); }
.page fieldset { margin: 0; padding: 0 8px; min-width: 0; border: 1px solid var(--shadow); box-shadow: 1px 1px #fff, inset 1px 1px #fff; }
.page legend { padding: 0 2px; margin-left: -2px; background: var(--face); }
.page .name { height: 51px; margin-top: 7px; }
.name input { display: block; width: 100%; height: 23px; margin-top: 5px; background: var(--face); border: 2px solid var(--dark); border-right: 1px solid #fff; border-bottom: 1px solid #fff; border-top-color: var(--shadow); border-left-color: var(--shadow); box-shadow: inset 1px 1px var(--dark); }
.page .display { height: 41px; margin: 18px 0 23px; }
.display input { appearance: none; width: 13px; height: 13px; margin: 6px 5px 0 9px; vertical-align: top; background: #fff; border: 1px solid; border-color: var(--shadow) #fff #fff var(--shadow); box-shadow: inset 1px 1px var(--dark), inset -1px -1px var(--face); }
.display label { display: inline-block; margin-top: 6px; }

.status { display: flex; gap: 3px; height: 20px; flex: none; padding: 4px 0 0; box-shadow: inset 0 2px var(--face), inset 0 3px #fff; }
.message { flex: 1; padding-top: 2px; }
.cell { width: 65px; padding: 1px; border: 1px solid var(--shadow); border-right-color: #fff; border-bottom-color: #fff; white-space: pre; }
.cell.widget { width: 135px; }
.sizer { width: 14px; height: 14px; margin: 2px 1px 0 1px; }
```

FILE: grid.js
```js
const NS = 'http://www.w3.org/2000/svg';
const SPAN = 20;

function addPath(group, kind, d) {
  const path = document.createElementNS(NS, 'path');
  path.setAttribute('class', kind);
  path.setAttribute('d', d);
  group.append(path);
}

// Ground-plane coordinates to perspective view coordinates.
function project(u, v) {
  const w = 3 * (1 - 0.0201 * u - 0.0196 * v);
  const x = (463 + 20.84 * u - 29.7 * v) / w - 10;
  const y = (463 - 0.82 * u + 14.73 * v) / w - 16;
  return x.toFixed(1) + ' ' + y.toFixed(1);
}

function kindOf(i) {
  return i === 0 ? 'axis' : i % 10 === 0 ? 'major' : 'minor';
}

function drawIso(group) {
  const order = { minor: 0, major: 1, axis: 2 };
  const steps = Array.from({ length: SPAN * 2 + 1 }, (_, n) => n - SPAN)
    .sort((a, b) => order[kindOf(a)] - order[kindOf(b)]);
  for (const i of steps) {
    addPath(group, kindOf(i), `M${project(i, -SPAN)}L${project(i, SPAN)}M${project(-SPAN, i)}L${project(SPAN, i)}`);
  }
}

function drawFlat(group, cx, cy) {
  const pitch = 21.93;
  for (const i of [-6, -5, -4, -3, -2, -1, 1, 2, 3, 4, 5, 6, 0]) {
    const x = Math.floor(cx + 0.3 + i * pitch) + 0.5;
    const y = Math.floor(cy + 0.9 + i * pitch) + 0.5;
    addPath(group, kindOf(i), `M${x} 0V300M0 ${y}H300`);
  }
}

for (const svg of document.querySelectorAll('.grid')) {
  const group = svg.querySelector('.lines');
  if (svg.dataset.plane === 'iso') drawIso(group);
  else drawFlat(group, ...svg.dataset.plane.split(',').map(Number));
}
```
